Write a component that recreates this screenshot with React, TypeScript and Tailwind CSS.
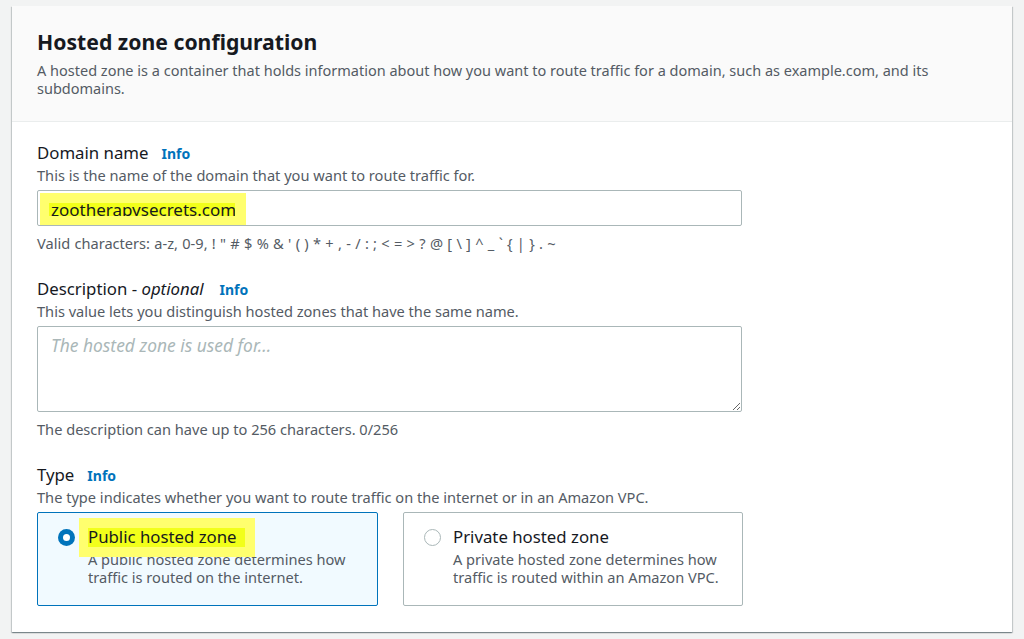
import React from "react";

const font = { fontFamily: '"Noto Sans", "Open Sans", Arial, sans-serif' };

function Label({ children }: { children: React.ReactNode }) {
  return (
    <div className="flex h-[22px] items-baseline text-[16.8px] leading-[22px] text-[#16191f]">
      <span>{children}</span>
      <span className="ml-[13px] text-[14px] font-bold leading-[22px] text-[#0073bb]">Info</span>
    </div>
  );
}

export default function App() {
  return (
    <div className="min-h-[639px] w-[1024px] bg-[#f2f3f3] pt-[6px] pl-[12px] pr-[12px]" style={font}>
      <div className="w-[1000px] bg-white shadow-[0_1px_1px_0_rgba(0,28,36,0.3),1px_1px_1px_0_rgba(0,28,36,0.15),-1px_1px_1px_0_rgba(0,28,36,0.15)]">
        <div className="border-b border-[#eaeded] bg-[#fafafa] pl-[25px] pr-[40px] pt-[22px] pb-[24px]">
          <h2 className="text-[21.2px] font-bold leading-[28px] text-[#16191f]">Hosted zone configuration</h2>
          <p className="mt-[5px] text-[14.5px] leading-[18px] text-[#545b64]">
            A hosted zone is a container that holds information about how you want to route traffic for a domain, such as example.com, and its subdomains.
          </p>
        </div>
        <div className="pl-[25px] pt-[20px] pb-[26px]">
          <Label>Domain name</Label>
          <div className="mt-[1px] text-[14.6px] leading-[20px] text-[#545b64]">This is the name of the domain that you want to route traffic for.</div>
          <div className="relative mt-[5px] h-[36px] w-[705px] rounded-[2px] border border-[#aab7b8] bg-white">
            <div className="absolute left-[2px] top-[2px] h-[32px] w-[206px] bg-[#ffff6e]">
              <div className="absolute left-[9px] top-[10px] h-[13px] w-[186px] overflow-hidden bg-[#f2ff1a]">
                <span className="-mt-[2px] ml-[2px] block whitespace-nowrap text-[17px] leading-[17px] text-[#16191f]">zootherapysecrets.com</span>
              </div>
            </div>
          </div>
          <div className="mt-[7px] text-[14.6px] leading-[20px] text-[#545b64] [word-spacing:0.5px]">
            Valid characters: a-z, 0-9, ! " # $ % &amp; ' ( ) * + , - / : ; &lt; = &gt; ? @ [ \ ] ^ _ ` {"{"} | {"}"} . ~
          </div>

          <div className="mt-[25px]">
            <Label>
              Description - <i className="pr-[3px]">optional</i>
            </Label>
          </div>
          <div className="mt-[1px] text-[14.6px] leading-[20px] text-[#545b64]">This value lets you distinguish hosted zones that have the same name.</div>
          <textarea
            className="mt-[5px] block h-[86px] w-[705px] rounded-[2px] border border-[#aab7b8] bg-white px-[13px] py-[4px] text-[17.4px] leading-[28px] text-[#16191f] outline-none placeholder:italic placeholder:text-[#aab7b8]"
            style={font}
            placeholder="The hosted zone is used for..."
          />
          <div className="mt-[7px] text-[14.6px] leading-[20px] text-[#545b64]">The description can have up to 256 characters. 0/256</div>

          <div className="mt-[25px]">
            <Label>Type</Label>
          </div>
          <div className="mt-[1px] text-[14.6px] leading-[20px] text-[#545b64]">The type indicates whether you want to route traffic on the internet or in an Amazon VPC.</div>
          <div className="mt-[5px] flex gap-[25px]">
            <div className="relative flex h-[94px] w-[341px] rounded-[2px] border border-[#0073bb] bg-[#f1faff] pl-[20px] pr-[20px] pt-[13px]">
              <div className="mt-[3px] flex h-[17px] w-[17px] shrink-0 items-center justify-center rounded-full bg-[#0073bb]">
                <div className="h-[7px] w-[7px] rounded-full bg-white" />
              </div>
              <div className="ml-[13px]">
                <div className="text-[16.8px] leading-[22px] text-[#16191f]">Public hosted zone</div>
                <div className="mt-[2px] text-[14.6px] leading-[18px] text-[#545b64]">A public hosted zone determines how traffic is routed on the internet.</div>
              </div>
              <div className="absolute left-[41px] top-[5px] h-[39px] w-[176px] bg-[#ffff6e]">
                <div className="absolute left-[9px] top-[10px] h-[19px] w-[157px] bg-[#f2ff1a]" />
                <div className="absolute left-[9px] top-[8px] whitespace-nowrap text-[16.8px] leading-[22px] text-[#16191f]">Public hosted zone</div>
              </div>
            </div>
            <div className="flex h-[94px] w-[340px] rounded-[2px] border border-[#aab7b8] bg-white pl-[20px] pr-[20px] pt-[13px]">
              <div className="mt-[3px] h-[17px] w-[17px] shrink-0 rounded-full border-[1.5px] border-[#aab7b8] bg-white" />
              <div className="ml-[12px]">
                <div className="text-[16.8px] leading-[22px] text-[#16191f]">Private hosted zone</div>
                <div className="mt-[2px] text-[14.6px] leading-[18px] text-[#545b64]">A private hosted zone determines how traffic is routed within an Amazon VPC.</div>
              </div>
            </div>
          </div>
        </div>
      </div>
    </div>
  );
}
